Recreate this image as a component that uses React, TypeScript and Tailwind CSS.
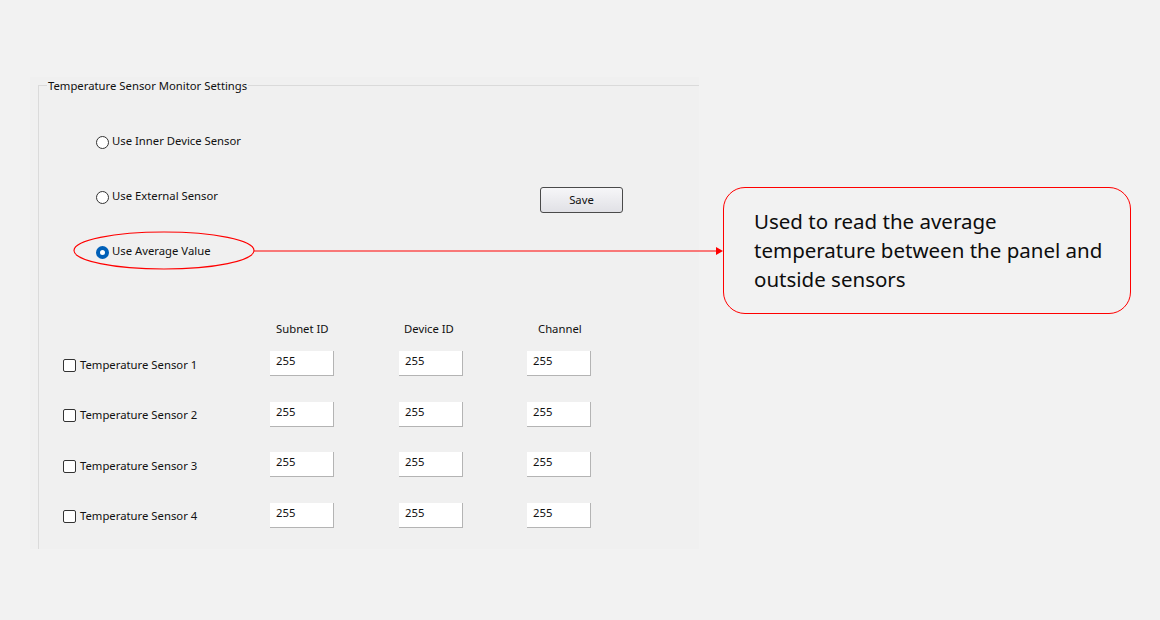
import React from "react";

const ui = { fontFamily: '"Noto Sans", "Open Sans", sans-serif' };

function Radio({ label, checked }: { label: string; checked?: boolean }) {
  return (
    <div className="flex items-center h-[20px]">
      {checked ? (
        <span className="w-[13px] h-[13px] rounded-full border-[4px] border-[#0060b8] bg-white box-border" />
      ) : (
        <span className="w-[13px] h-[13px] rounded-full border border-[#333333] bg-white box-border" />
      )}
      <span className="ml-[3px] -mt-[1px] text-[11.3px] text-[#111]">{label}</span>
    </div>
  );
}

function Field() {
  return (
    <div className="w-[64px] h-[25px] bg-white border-b border-r border-[#b4b4b4] pl-[6px] pt-[2px] text-[11.3px] text-[#111] leading-[16px]">
      255
    </div>
  );
}

export default function App() {
  const rows = [1, 2, 3, 4];
  return (
    <div className="relative w-[1160px] h-[620px] bg-[#f2f2f2] flex items-start overflow-hidden" style={ui}>
      <div className="mt-[77px] ml-[30px] w-[669px] h-[472px] bg-[#f0f0f0] pl-[8px] pt-[8px]">
        <div className="relative h-full border-l border-t border-[#dadada]">
          <div className="absolute -top-[8px] left-[8px] px-[1px] bg-[#f0f0f0] text-[11.3px] leading-[16px] text-[#111]">
            Temperature Sensor Monitor Settings
          </div>
          <div className="flex pt-[46px] pl-[57px]">
            <div className="w-[444px] flex flex-col gap-[35px]">
              <Radio label="Use Inner Device Sensor" />
              <Radio label="Use External Sensor" />
              <Radio label="Use Average Value" checked />
            </div>
            <button className="mt-[55px] w-[83px] h-[26px] rounded-[3px] border border-[#4a4a4a] bg-gradient-to-b from-[#f6f6f8] to-[#e1e1e6] text-[11.3px] text-[#111]">
              Save
            </button>
          </div>
          <div className="mt-[59px] pl-[24px]">
            <div className="grid grid-cols-[207px_129px_128px_64px] text-[11.3px] leading-[16px] text-[#111]">
              <div />
              <div className="pl-[6px]">Subnet ID</div>
              <div className="pl-[5px]">Device ID</div>
              <div className="pl-[11px]">Channel</div>
            </div>
            <div className="mt-[14px] flex flex-col gap-[25.5px]">
              {rows.map((r) => (
                <div key={r} className="grid grid-cols-[207px_129px_128px_64px] items-center">
                  <div className="flex items-center pt-[3px]">
                    <span className="w-[13px] h-[13px] rounded-[2px] border border-[#333333] bg-white box-border" />
                    <span className="ml-[4px] text-[11.3px] text-[#111]">Temperature Sensor {r}</span>
                  </div>
                  <Field />
                  <Field />
                  <Field />
                </div>
              ))}
            </div>
          </div>
        </div>
      </div>

      <div className="mt-[187px] ml-[24px] w-[408px] h-[127px] rounded-[22px] border border-[#ff0000] pl-[30px] pt-[19px] text-[20.5px] leading-[29px] text-[#0d0d0d]">
        Used to read the average
        <br />
        temperature between the panel and
        <br />
        outside sensors
      </div>

      <svg className="absolute left-0 top-0 pointer-events-none" width="1160" height="620">
        <ellipse cx="164" cy="250.5" rx="90" ry="18.5" fill="none" stroke="#ff0000" strokeWidth="1.2" />
        <line x1="254" y1="251" x2="716" y2="251" stroke="#ff0000" strokeWidth="1.2" />
        <polygon points="716,247 723,251 716,255" fill="#ff0000" />
      </svg>
    </div>
  );
}
